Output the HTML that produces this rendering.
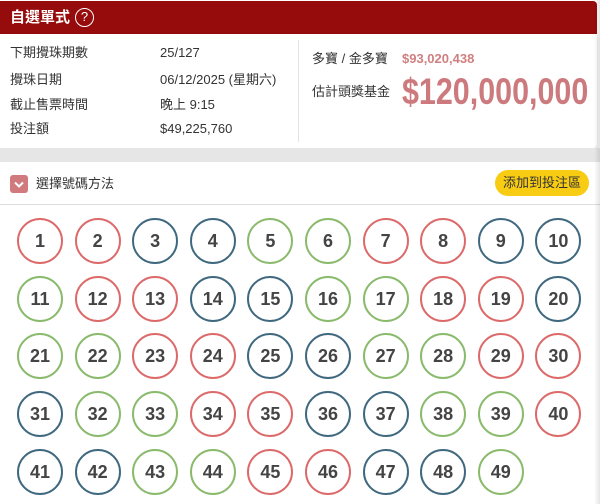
<!DOCTYPE html>
<html><head><meta charset="utf-8"><style>
*{margin:0;padding:0;box-sizing:border-box}
body{width:600px;height:504px;overflow:hidden;background:#fff;font-family:"Liberation Sans","Noto Sans CJK TC",sans-serif;color:#333;position:relative}
.hdr{position:absolute;left:0;top:1px;width:597px;height:33px;background:#960b0b;color:#fff;font-weight:bold;font-size:15px;line-height:33px;padding-left:10px;border-top-right-radius:4px}
.q{position:absolute;left:75px;top:7px;width:19px;height:19px;border:1.5px solid #fff;border-radius:50%;font-size:13px;line-height:16px;text-align:center;font-weight:normal}
.card{position:absolute;left:0;top:34px;width:597px;height:114px;background:#fff;box-shadow:0 2px 4px rgba(0,0,0,.15);border-bottom-right-radius:4px}
.t{position:absolute;font-size:13px;line-height:16px;height:16px;color:#333;white-space:nowrap}
.band{position:absolute;left:0;top:148px;width:600px;height:14px;background:#e6e6e6}
.rs{position:absolute;right:0;top:0;width:6px;height:504px;background:linear-gradient(to right,rgba(0,0,0,0),rgba(0,0,0,.1))}
.ball{position:absolute;width:46px;height:46px;border:2px solid;border-radius:50%;text-align:center;line-height:42px;font-weight:bold;font-size:18px;color:#444}
.r{border-color:#dc6a6a}.b{border-color:#40697f}.g{border-color:#8aba6c}
</style></head><body>
<div class="hdr">自選單式<div class="q">?</div></div>
<div class="card">
<div class="t" style="left:10px;top:11px">下期攪珠期數</div><div class="t" style="left:160px;top:11px">25/127</div>
<div class="t" style="left:10px;top:38px">攪珠日期</div><div class="t" style="left:160px;top:38px">06/12/2025 (星期六)</div>
<div class="t" style="left:10px;top:63px">截止售票時間</div><div class="t" style="left:160px;top:63px">晚上 9:15</div>
<div class="t" style="left:10px;top:87px">投注額</div><div class="t" style="left:160px;top:87px">$49,225,760</div>
<div style="position:absolute;left:298px;top:6px;width:1px;height:102px;background:#e4e4e4"></div>
<div class="t" style="left:312px;top:17px">多寶 / 金多寶</div><div class="t" style="left:402px;top:17px;color:#d08080;font-weight:bold">$93,020,438</div>
<div class="t" style="left:312px;top:50px">估計頭獎基金</div>
<div style="position:absolute;left:402px;top:38px;font-weight:bold;font-size:37px;line-height:40px;color:#cd7a7e;white-space:nowrap;transform:scaleX(0.823);transform-origin:0 0">$120,000,000</div>
</div>
<div class="band"></div>
<div style="position:absolute;left:10px;top:175px;width:18px;height:18px;background:#d07a7e;border-radius:3px"><svg width="18" height="18"><path d="M5 7.5l4 4 4-4" stroke="#fff" stroke-width="2" fill="none"/></svg></div>
<div class="t" style="left:36px;top:176px">選擇號碼方法</div>
<div style="position:absolute;left:495px;top:170px;width:94px;height:26px;background:#f9cc14;border-radius:13px;font-size:13px;line-height:26px;text-align:center;color:#333">添加到投注區</div>
<div style="position:absolute;left:0;top:204px;width:600px;height:1px;background:#ddd"></div>
<div id="g"></div>
<div class="rs"></div>
<script>
var red=[1,2,7,8,12,13,18,19,23,24,29,30,34,35,40,45,46],blue=[3,4,9,10,14,15,20,25,26,31,36,37,41,42,47,48],h='';
for(var n=1;n<=49;n++){var i=(n-1)%10,j=Math.floor((n-1)/10);var c=red.indexOf(n)>=0?'r':blue.indexOf(n)>=0?'b':'g';
h+='<div class="ball '+c+'" style="left:'+(17+i*57.6)+'px;top:'+(218+j*57.7)+'px">'+n+'</div>';}
document.getElementById('g').innerHTML=h;
</script>
</body></html>
